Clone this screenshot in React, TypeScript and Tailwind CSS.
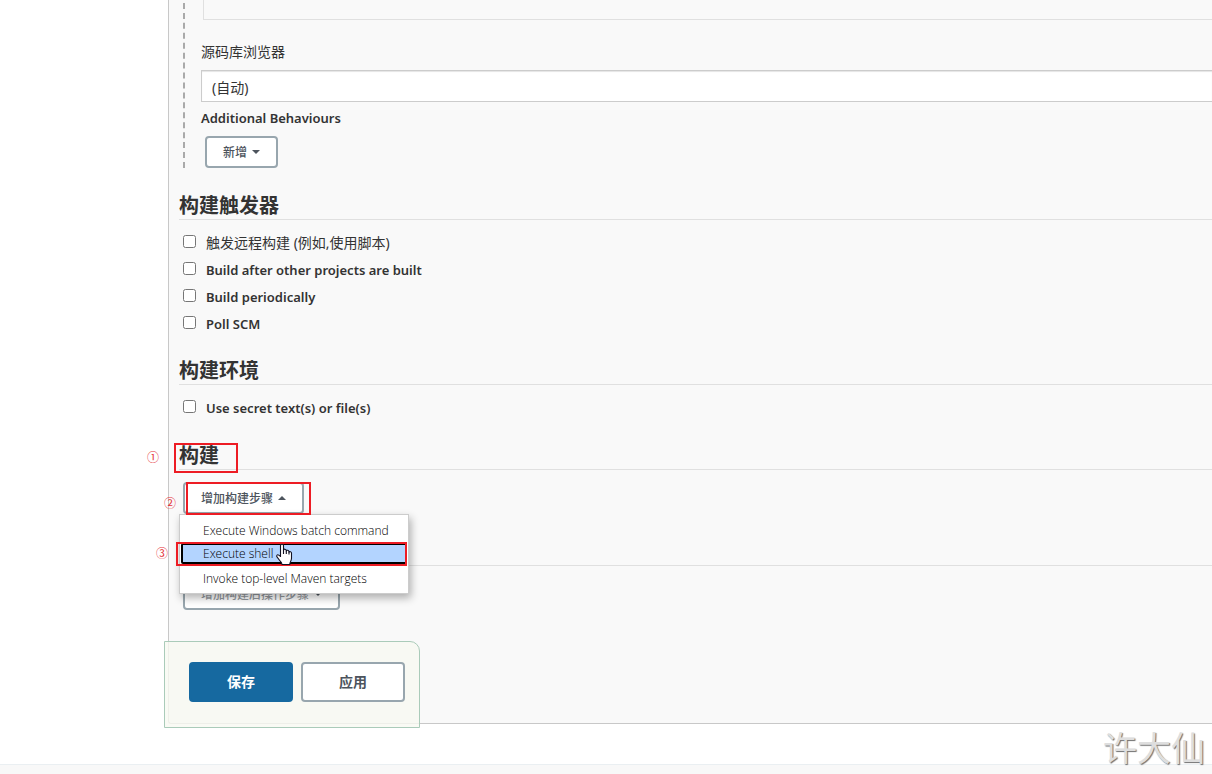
import { ReactNode } from "react";

function SectionTitle({ children }: { children?: ReactNode }) {
  return (
    <h2 className="h-[30px] border-b border-[#e0e0e0] text-[20px] font-bold leading-8 text-[#333]">
      {children}
    </h2>
  );
}

function CheckRow({ id, label, medium = true }: { id: string; label: string; medium?: boolean }) {
  return (
    <div className="flex h-[27px] items-center gap-[10px] pl-1">
      <input id={id} type="checkbox" className="mb-1 size-[13px] shrink-0" />
      <label
        htmlFor={id}
        className={medium ? "text-[13px] font-semibold leading-[27px]" : "pb-[2px] text-[14px] leading-[25px]"}
      >
        {label}
      </label>
    </div>
  );
}

function Caret({ up = false }: { up?: boolean }) {
  return (
    <svg width="8" height="4" viewBox="0 0 8 4" aria-hidden="true">
      <path d={up ? "M0 4 4 0 8 4Z" : "M0 0h8L4 4Z"} fill="currentColor" />
    </svg>
  );
}

function MenuButton({ label, up, faded }: { label: string; up?: boolean; faded?: boolean }) {
  return (
    <button
      type="button"
      className="flex h-8 items-center gap-[5px] rounded-[4px] border-2 border-[#98a6ae] bg-white px-4 text-[12px] font-medium text-[#4d545d]"
    >
      <span className={faded ? "pt-[2px] opacity-60" : "pt-[2px]"}>{label}</span>
      <Caret up={up} />
    </button>
  );
}

function HandCursor() {
  return (
    <svg
      className="absolute left-[95px] top-[28px]"
      width="18"
      height="23"
      viewBox="0 0 18 23"
      aria-hidden="true"
    >
      <path
        d="M5.5 13.5V2.6C5.5.7 8.5.7 8.5 2.6V7c.3-1.2 2.6-1.1 2.8.4v.5c.5-1 2.6-.8 2.7.8v.4c.6-.8 2.5-.5 2.5 1v5.2c0 1.5-.4 2.4-1 3.4-.5.9-.7 1.7-.7 2.8H7c-.2-1.7-1-2.5-1.900-3.500L2 13.900c-.9-1.200.2-2.600 1.500-1.900.8.4 1.500 1 2 1.500Z"
        fill="#fff"
        stroke="#112"
        strokeWidth="1.1"
        strokeLinejoin="round"
      />
      <path d="M8.5 6.5v4.500M11.300 7.500v3.500M14 8.500v3" stroke="#112" strokeWidth="1.1" />
    </svg>
  );
}

export default function App() {
  return (
    <div className="relative flex min-h-screen flex-col overflow-hidden bg-white font-['Noto_Sans','Noto_Sans_CJK_SC',sans-serif] text-[#333]">
      <main className="relative ml-[168px] rounded-bl-[3px] border-b border-l border-[#c8c8c8] bg-[#f9f9f9] pb-[113px] pl-[10px]">
        <section className="-mt-[7px] ml-1 border-l-2 border-dashed border-[#aaa] pl-4">
          <div className="ml-[2px] h-[27px] border-b border-l border-[#e0e0e0]" />
          <label htmlFor="browser" className="mt-[22px] block text-[14px] leading-5">
            源码库浏览器
          </label>
          <select
            id="browser"
            className="mt-2 block h-8 w-full appearance-none border border-r-0 border-[#ccc] bg-white px-[10px] pt-[2px] text-[14px] shadow-[inset_0_1px_1px_#e5e5e5]"
          >
            <option>(自动)</option>
          </select>
          <div className="mb-2 mt-[6px] text-[13px] font-semibold leading-5">Additional Behaviours</div>
          <div className="flex pl-1">
            <MenuButton label="新增" />
          </div>
        </section>

        <section className="mt-[22px]">
          <SectionTitle>构建触发器</SectionTitle>
          <div className="mt-[10px]">
            <CheckRow id="remote" label="触发远程构建 (例如,使用脚本)" medium={false} />
            <CheckRow id="after" label="Build after other projects are built" />
            <CheckRow id="periodic" label="Build periodically" />
            <CheckRow id="poll" label="Poll SCM" />
          </div>
        </section>

        <section className="mt-[17px]">
          <SectionTitle>构建环境</SectionTitle>
          <div className="mt-[10px]">
            <CheckRow id="secret" label="Use secret text(s) or file(s)" />
          </div>
        </section>

        <section className="relative mt-[18px]">
          <SectionTitle>构建</SectionTitle>
          <span className="absolute -left-[5px] top-[3px] h-[30px] w-16 border-2 border-[#ed1c24]" />
          <span className="absolute -left-8 top-2 text-[12px] leading-5 text-[#e5333b]">①</span>
          <div className="relative mt-3 flex pl-1">
            <MenuButton label="增加构建步骤" up />
            <span className="absolute left-[7px] top-0 z-20 h-[33px] w-[125px] border-2 border-[#ed1c24]" />
            <span className="absolute -left-[15px] top-3 text-[12px] leading-5 text-[#e5333b]">②</span>
            <div className="absolute left-0 top-8 z-10 flex w-[230px] flex-col border border-[#ccc] bg-white pb-[2px] pt-1 font-['Open_Sans',sans-serif] text-[12px] font-light text-black shadow-[2px_4px_8px_rgba(0,0,0,0.3)]">
              <button type="button" className="h-6 pl-[23px] text-left">
                Execute Windows batch command
              </button>
              <button
                type="button"
                className="mx-px mb-[2px] h-[21px] rounded-[2px] border-2 border-black bg-[#b3d4ff] pl-5 text-left leading-[18px]"
              >
                Execute shell
              </button>
              <button type="button" className="mt-px h-6 pl-[23px] text-left">
                Invoke top-level Maven targets
              </button>
              <span className="absolute -left-[4px] top-[27px] h-6 w-[231px] border-2 border-[#ed1c24]" />
              <span className="absolute -left-6 top-7 font-['Noto_Sans_CJK_SC',sans-serif] text-[12px] font-normal leading-5 text-[#e5333b]">
                ③
              </span>
              <HandCursor />
            </div>
          </div>
        </section>

        <section className="mt-[22px]">
          <div className="h-[30px] border-b border-[#e0e0e0]" />
          <div className="mt-3 flex pl-1">
            <MenuButton label="增加构建后操作步骤" faded />
          </div>
        </section>

        <div className="absolute -bottom-[5px] -left-[5px] flex gap-2 rounded-tr-[10px] border border-[#aacbb9] bg-[#f8f9f1]/80 pb-[25px] pl-6 pr-[14px] pt-5">
          <button
            type="button"
            className="h-10 w-[104px] rounded-[4px] border-2 border-[#1669a0] bg-[#1669a0] pb-[2px] text-[14px] font-bold text-white"
          >
            保存
          </button>
          <button
            type="button"
            className="h-10 w-[104px] rounded-[4px] border-2 border-[#98a6ae] bg-white pb-[2px] text-[14px] font-bold text-[#4d545d]"
          >
            应用
          </button>
        </div>
      </main>

      <footer className="mt-10 flex-1 border-t border-[#eaeff2] bg-[#f8f8f8]" />
      <div className="absolute bottom-[2px] right-[7px] text-[34px] leading-[48px] text-[#dedede] [text-shadow:1px_1px_1px_#707070]">
        许大仙
      </div>
    </div>
  );
}
